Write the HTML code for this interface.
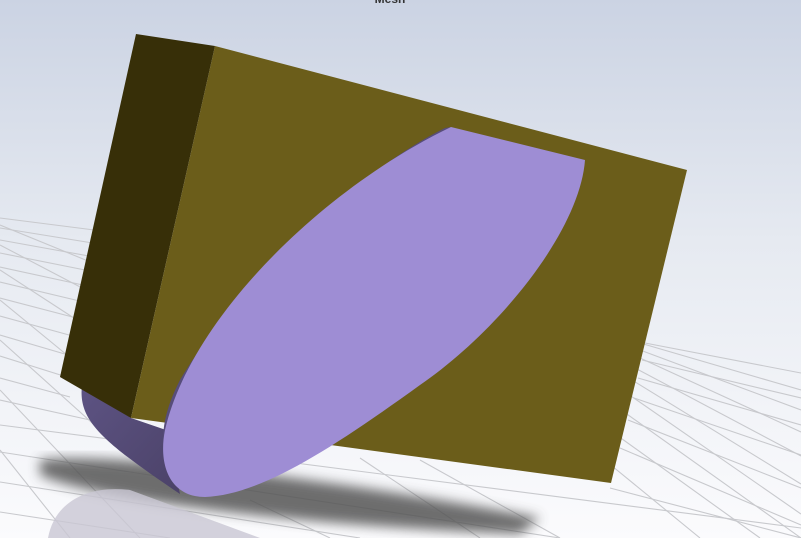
<!DOCTYPE html>
<html><head><style>html,body{margin:0;padding:0;width:801px;height:538px;overflow:hidden}</style></head><body>
<svg width="801" height="538" xmlns="http://www.w3.org/2000/svg">
<defs>
<linearGradient id="bg" x1="0" y1="0" x2="0" y2="1">
<stop offset="0" stop-color="#cbd3e3"/><stop offset="0.45" stop-color="#e6eaf1"/><stop offset="1" stop-color="#fbfbfd"/>
</linearGradient>
<filter id="bl"><feGaussianBlur stdDeviation="6"/></filter>
<linearGradient id="cyl" x1="0" y1="0" x2="1" y2="1"><stop offset="0" stop-color="#5d5383"/><stop offset="1" stop-color="#4b4268"/></linearGradient>
</defs>
<rect width="801" height="538" fill="url(#bg)"/>
<text x="390" y="3" font-family="Liberation Sans,sans-serif" font-size="12" font-weight="bold" fill="#333" text-anchor="middle">Mesh</text>
<g stroke="#c8c9cd" stroke-width="1.1" fill="none">
<path d="M0,218 L110,232 M0,228 L105,245 M0,240 L100,258 M0,253 L95,272 M0,267 L92,287 M0,282 L88,303 M0,298 L84,320 M0,316 L80,338 M0,335 L75,357 M0,356 L70,378 M0,378 L70,397 M0,400 L90,420 M0,425 L801,528 M0,452 L560,538 M0,482 L360,538 M0,512 L170,538"/>
<path d="M0,225 L110,270 M0,245 L105,300 M0,270 L100,335 M0,300 L95,378 M0,340 L100,430 M0,390 L140,538 M0,450 L70,538"/>
<path d="M640,343 L801,390 M640,350 L801,410 M640,358 L801,432 M635,368 L801,456 M632,380 L801,484 M628,394 L801,514 M624,412 L801,538 M618,436 L760,538 M612,466 L700,538"/>
<path d="M645,343 L801,373 M642,360 L801,398 M638,378 L801,425 M634,398 L801,455 M628,420 L801,488 M620,448 L801,525 M610,488 L801,538 M360,458 L480,538 M420,460 L560,538 M250,500 L330,538"/>
</g>
<path d="M40,460 C120,450 400,490 540,518 L520,534 C400,530 120,510 40,475 Z" fill="#555" opacity="0.85" filter="url(#bl)"/>
<path d="M48,538 C55,500 90,485 130,490 L260,538 Z" fill="#c9c7d3" opacity="0.8"/>
<path d="M82,385 C78,420 100,440 180,494 L166,430 L131,418 Z" fill="url(#cyl)"/>
<path d="M136,34 L215,46 L131,418 L60,377 Z" fill="#372f08"/>
<path d="M215,46 L687,170 L611,483 L131,418 Z" fill="#6b5d1a"/>
<path d="M451,127 L445,128 C360,170 240,280 180,380 C162,415 158,445 170,470 L175,430 C220,300 330,190 451,127 Z" fill="#574d7a"/>
<path d="M451,127 L585,160 C580,230 500,330 420,385 C330,450 260,495 205,497 C170,497 158,465 165,430 C190,320 320,190 451,127 Z" fill="#9e8dd4"/>
</svg>
</body></html>
